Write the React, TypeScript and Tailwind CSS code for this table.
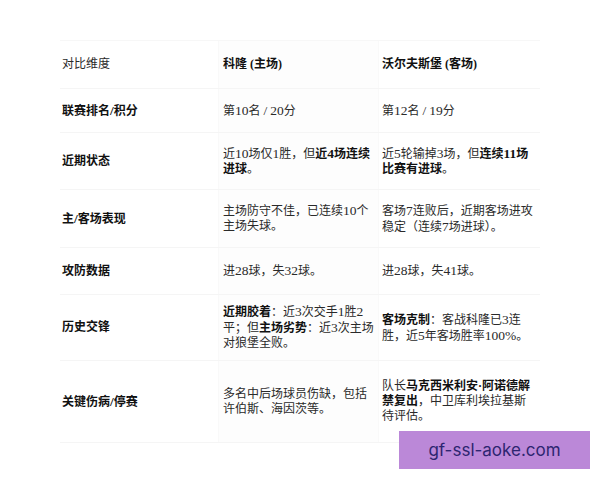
import React from "react";

// Render a text with **bold** segments and \n line breaks; Latin runs get a slightly larger size.
function latin(s: string, keyBase: string) {
  const parts = s.split(/([A-Za-z0-9%\/]+)/);
  return parts.map((p, i) =>
    /^[A-Za-z0-9%\/]+$/.test(p) ? (
      <span key={keyBase + i} className="text-[13.5px]">
        {p}
      </span>
    ) : (
      <React.Fragment key={keyBase + i}>{p}</React.Fragment>
    )
  );
}

function Rich({ text }: { text: string }) {
  const lines = text.split("\n");
  return (
    <div>
      {lines.map((line, li) => {
        const segs = line.split("**");
        return (
          <React.Fragment key={li}>
            {li > 0 && <br />}
            {segs.map((seg, si) =>
              si % 2 === 1 ? (
                <span key={si} className="font-bold text-[#111]">
                  {latin(seg, `${li}-${si}-`)}
                </span>
              ) : (
                <React.Fragment key={si}>{latin(seg, `${li}-${si}-`)}</React.Fragment>
              )
            )}
          </React.Fragment>
        );
      })}
    </div>
  );
}

type Row = { h: string; a: string; b: string; c: string };

const rows: Row[] = [
  { h: "h-[48px]", a: "对比维度", b: "**科隆 (主场)**", c: "**沃尔夫斯堡 (客场)**" },
  { h: "h-[44px]", a: "**联赛排名/积分**", b: "第10名 / 20分", c: "第12名 / 19分" },
  {
    h: "h-[57px]",
    a: "**近期状态**",
    b: "近10场仅1胜，但**近4场连续**\n**进球**。",
    c: "近5轮输掉3场，但**连续11场**\n**比赛有进球**。",
  },
  {
    h: "h-[58px]",
    a: "**主/客场表现**",
    b: "主场防守不佳，已连续10个\n主场失球。",
    c: "客场7连败后，近期客场进攻\n稳定（连续7场进球）。",
  },
  { h: "h-[47px]", a: "**攻防数据**", b: "进28球，失32球。", c: "进28球，失41球。" },
  {
    h: "h-[66px]",
    a: "**历史交锋**",
    b: "**近期胶着**：近3次交手1胜2\n平；但**主场劣势**：近3次主场\n对狼堡全败。",
    c: "**客场克制**：客战科隆已3连\n胜，近5年客场胜率100%。",
  },
  {
    h: "h-[82px]",
    a: "**关键伤病/停赛**",
    b: "多名中后场球员伤缺，包括\n许伯斯、海因茨等。",
    c: "队长**马克西米利安·阿诺德解**\n**禁复出**，中卫库利埃拉基斯\n待评估。",
  },
];

export default function App() {
  return (
    <div
      className="relative w-[600px] h-[480px] bg-white overflow-hidden text-[#2a2a2a] text-[12px] leading-[15px]"
      style={{ fontFamily: '"Liberation Serif", "Noto Sans CJK SC", serif' }}
    >
      <div className="pt-[40px] pl-[60px]">
        <div className="w-[480px] flex flex-col border-t border-[#f7f7f7]">
          {rows.map((r, i) => (
            <div key={i} className={`flex ${r.h} border-b border-[#f5f5f5]`}>
              <div className="w-[158px] flex items-center pl-[2px]">
                <Rich text={r.a} />
              </div>
              <div className="w-[160px] flex items-center pl-[4px] bg-[#fdfdfd] border-l border-[#f9f9f9]">
                <Rich text={r.b} />
              </div>
              <div className="w-[162px] flex items-center pl-[3px] border-l border-[#f9f9f9]">
                <Rich text={r.c} />
              </div>
            </div>
          ))}
        </div>
      </div>
      <div
        className="absolute left-[399px] top-[431px] w-[191px] h-[38px] bg-[#bb88d8] flex items-center justify-center text-[#2d2570] text-[17px]"
        style={{ fontFamily: 'Inter, "Noto Sans", sans-serif' }}
      >
        gf-ssl-aoke.com
      </div>
    </div>
  );
}
